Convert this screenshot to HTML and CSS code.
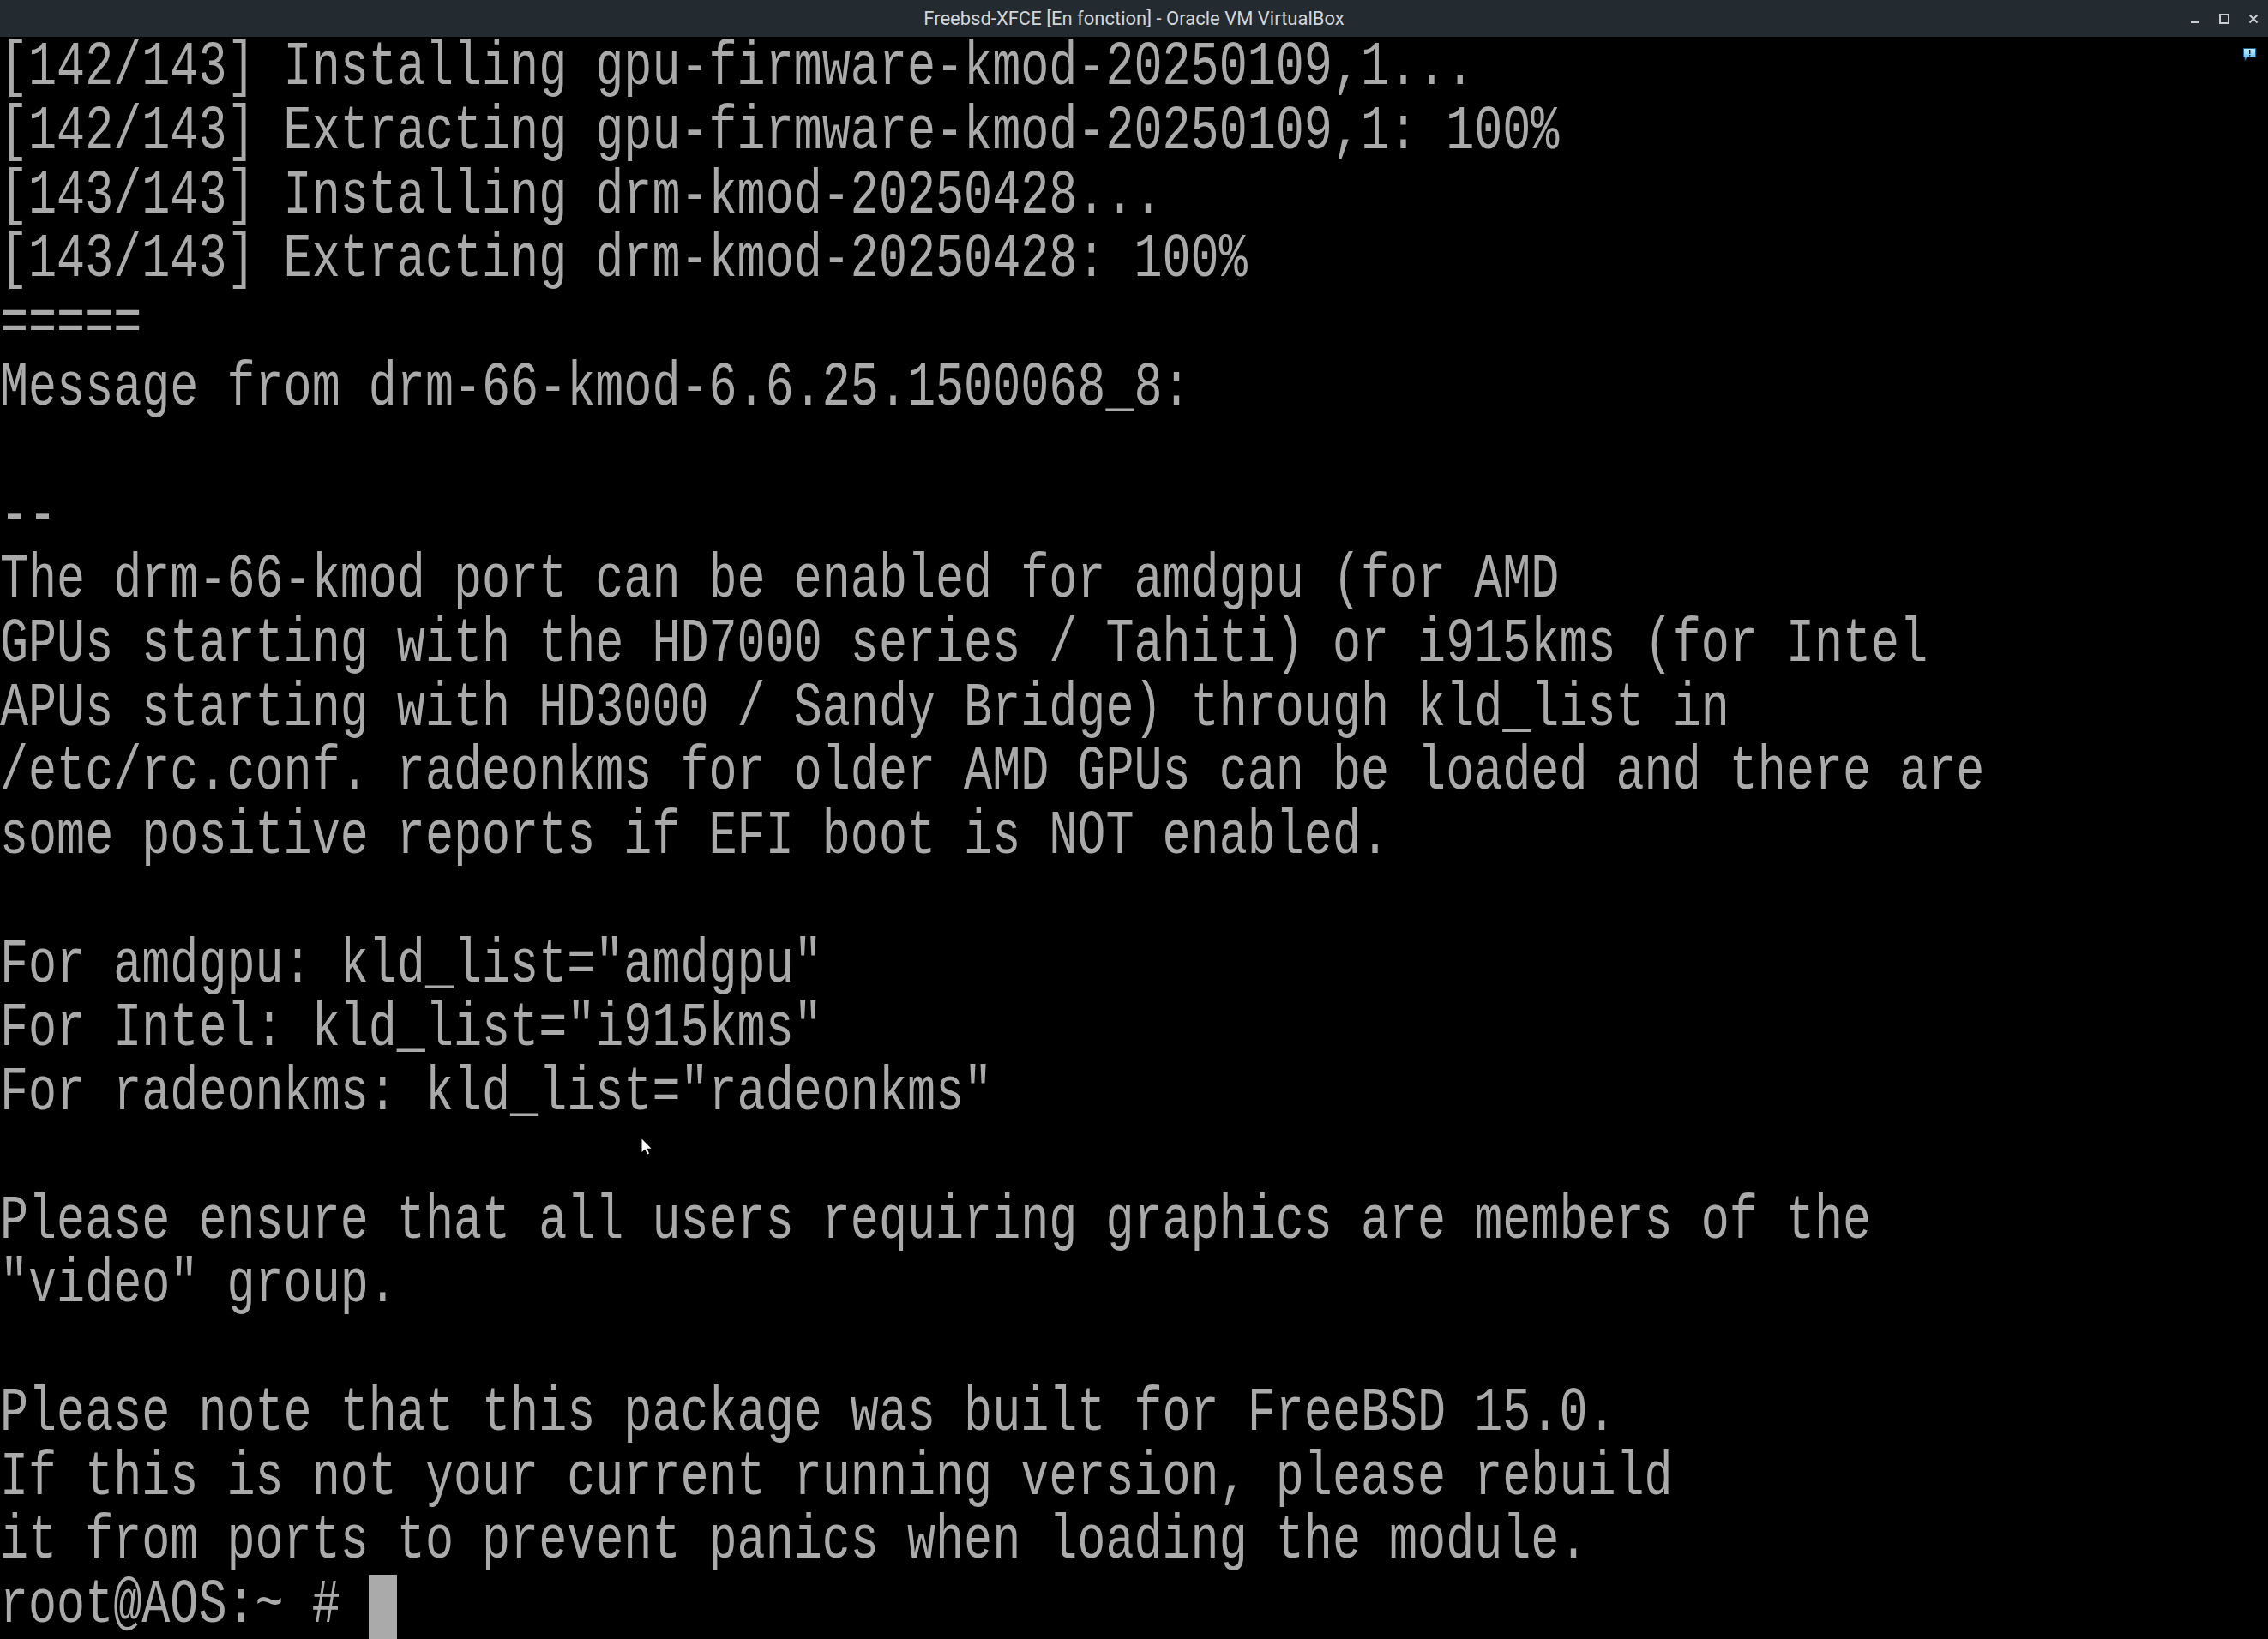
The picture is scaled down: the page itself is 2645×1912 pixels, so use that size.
FILE: index.html
```html
<!DOCTYPE html>
<html lang="en">
<head>
  <meta charset="UTF-8" />
  <title>Freebsd-XFCE [En fonction] - Oracle VM VirtualBox</title>
  <link rel="stylesheet" href="styles.css">
</head>
<body>
  <div class="window">
    <header class="titlebar">
      <span class="title">Freebsd-XFCE [En fonction] - Oracle VM VirtualBox</span>
      <div class="controls">
        <svg class="ctl" width="12" height="12" viewBox="0 0 12 12"><rect x="1" y="9" width="10" height="2" fill="#c9cdd1"/></svg>
        <svg class="ctl" width="12" height="12" viewBox="0 0 12 12"><rect x="1" y="1" width="10" height="10" fill="none" stroke="#c9cdd1" stroke-width="2"/></svg>
        <svg class="ctl" width="12" height="12" viewBox="0 0 12 12"><path d="M1.5 1.5 L10.5 10.5 M10.5 1.5 L1.5 10.5" stroke="#c9cdd1" stroke-width="2"/></svg>
      </div>
    </header>

    <main class="screen">
      <div class="line"><span class="txt">[142/143] Installing gpu-firmware-kmod-20250109,1...</span></div>
      <div class="line"><span class="txt">[142/143] Extracting gpu-firmware-kmod-20250109,1: 100%</span></div>
      <div class="line"><span class="txt">[143/143] Installing drm-kmod-20250428...</span></div>
      <div class="line"><span class="txt">[143/143] Extracting drm-kmod-20250428: 100%</span></div>
      <div class="line"><span class="txt">=====</span></div>
      <div class="line"><span class="txt">Message from drm-66-kmod-6.6.25.1500068_8:</span></div>
      <div class="line"></div>
      <div class="line"><span class="txt">--</span></div>
      <div class="line"><span class="txt">The drm-66-kmod port can be enabled for amdgpu (for AMD</span></div>
      <div class="line"><span class="txt">GPUs starting with the HD7000 series / Tahiti) or i915kms (for Intel</span></div>
      <div class="line"><span class="txt">APUs starting with HD3000 / Sandy Bridge) through kld_list in</span></div>
      <div class="line"><span class="txt">/etc/rc.conf. radeonkms for older AMD GPUs can be loaded and there are</span></div>
      <div class="line"><span class="txt">some positive reports if EFI boot is NOT enabled.</span></div>
      <div class="line"></div>
      <div class="line"><span class="txt">For amdgpu: kld_list="amdgpu"</span></div>
      <div class="line"><span class="txt">For Intel: kld_list="i915kms"</span></div>
      <div class="line"><span class="txt">For radeonkms: kld_list="radeonkms"</span></div>
      <div class="line"></div>
      <div class="line"><span class="txt">Please ensure that all users requiring graphics are members of the</span></div>
      <div class="line"><span class="txt">"video" group.</span></div>
      <div class="line"></div>
      <div class="line"><span class="txt">Please note that this package was built for FreeBSD 15.0.</span></div>
      <div class="line"><span class="txt">If this is not your current running version, please rebuild</span></div>
      <div class="line"><span class="txt">it from ports to prevent panics when loading the module.</span></div>
      <div class="line"><span class="txt">root@AOS:~ # </span><span class="cursor"></span></div>

      <!-- VirtualBox status bubble -->
      <svg class="notice" width="17" height="18" viewBox="0 0 17 18">
        <defs>
          <linearGradient id="bub" x1="0" y1="0" x2="0" y2="1">
            <stop offset="0" stop-color="#c8f0ff"/>
            <stop offset="1" stop-color="#4fb4ee"/>
          </linearGradient>
        </defs>
        <path d="M1.5 1.5 H15.5 V11.5 H5.5 L3 15.5 V11.5 H1.5 Z" fill="url(#bub)" stroke="#1d5f9c" stroke-width="1"/>
        <rect x="8" y="3" width="1.4" height="5" fill="#000"/>
        <rect x="8" y="9" width="1.4" height="1.4" fill="#000"/>
      </svg>

      <!-- mouse pointer -->
      <svg class="pointer" width="13" height="20" viewBox="0 0 13 20">
        <path d="M0.5 0.5 V16 L4.2 12.5 L7 18.5 L9 17.5 L6.4 11.8 H11.5 Z" fill="#fff"/>
      </svg>
    </main>
  </div>
</body>
</html>
```

FILE: styles.css
```css
body {
  margin: 0;
  background-color: #000;
  overflow: hidden;
}

.window {
  width: 2645px;
  height: 1912px;
  display: flex;
  flex-direction: column;
}

/* window decoration */
.titlebar {
  height: 43px;
  flex-shrink: 0;
  background-color: #232a30;
  display: flex;
  align-items: center;
  justify-content: center;
  position: relative;
}

.title {
  font-family: Roboto, "Noto Sans", sans-serif;
  font-size: 22px;
  color: #d2d6d9;
}

.controls {
  position: absolute;
  right: 11px;
  top: 16px;
  display: flex;
  gap: 22px;
}

.ctl {
  display: block;
}

/* vt console, 80x25 */
.screen {
  flex: 1;
  position: relative;
  background-color: #000;
  display: grid;
  grid-template-rows: repeat(25, 74.76px);
  color: #aaaaaa;
  font-family: "Liberation Mono", "DejaVu Sans Mono", monospace;
  font-size: 55.1px;
  line-height: 74.76px;
  white-space: pre;
}

.line {
  height: 74.76px;
  display: flex;
  align-items: flex-start;
}

.txt {
  display: inline-block;
  transform-origin: 0 52px;
  transform: translateY(4px) scaleY(1.295);
}

.cursor {
  display: inline-block;
  width: 33px;
  height: 75px;
  background-color: #aaaaaa;
}

.notice {
  position: absolute;
  left: 2615px;
  top: 12px;
}

.pointer {
  position: absolute;
  left: 748px;
  top: 1285px;
}
```
